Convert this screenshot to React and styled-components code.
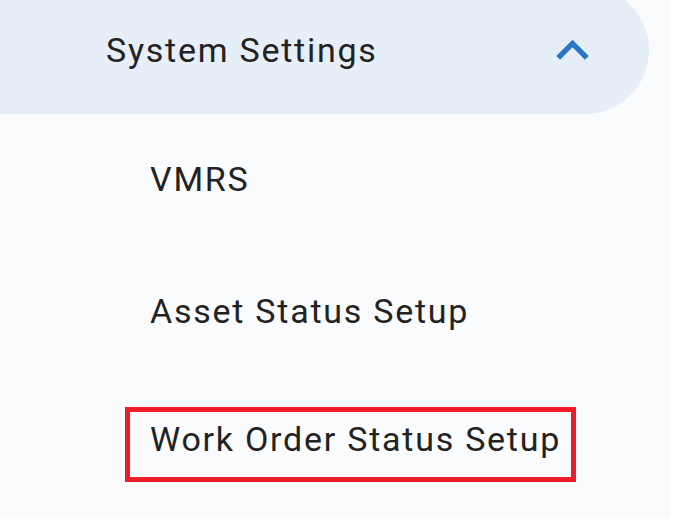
import React from "react";
import styled, { createGlobalStyle } from "styled-components";

const Global = createGlobalStyle`
  html, body { margin: 0; padding: 0; }
  body {
    background: #fafbfc;
    font-family: Roboto, "Noto Sans", "Liberation Sans", sans-serif;
    overflow: hidden;
  }
`;

const Page = styled.div`
  display: flex;
  width: 675px;
  height: 519px;
  overflow: hidden;
`;

const Nav = styled.nav`
  width: 671px;
  display: flex;
  flex-direction: column;
`;

const EdgeStrip = styled.div`
  width: 4px;
  background: #ffffff;
`;

const GroupHeader = styled.div`
  margin-top: -14px;
  width: 649px;
  height: 128px;
  box-sizing: border-box;
  display: flex;
  align-items: center;
  justify-content: space-between;
  padding: 0 44px 0 106px;
  background: #e6eef7;
  border-radius: 0 64px 64px 0;
`;

const Label = styled.span`
  font-size: 34px;
  line-height: 40px;
  letter-spacing: 1.75px;
  color: #222222;
  white-space: nowrap;
`;

const Chevron = styled.svg`
  width: 65px;
  height: 65px;
  fill: #2b76c5;
  flex: none;
`;

const SubList = styled.ul`
  list-style: none;
  margin: 0;
  padding: 45px 0 0 150px;
  display: flex;
  flex-direction: column;
  align-items: flex-start;
`;

const SubItem = styled.li`
  margin-top: ${(p) => p.$gap}px;
`;

const Highlight = styled.div`
  box-sizing: border-box;
  width: 451px;
  margin-left: -25px;
  padding: 7px 0 18px 20px;
  border: 5px solid #ec1c29;
`;

export default function App() {
  return (
    <>
      <Global />
      <Page>
        <Nav>
          <GroupHeader>
            <Label>System Settings</Label>
            <Chevron viewBox="0 0 24 24">
              <path d="M12 8l-6 6 1.41 1.41L12 10.83l4.59 4.58L18 14z" />
            </Chevron>
          </GroupHeader>
          <SubList>
            <SubItem $gap={0}>
              <Label>VMRS</Label>
            </SubItem>
            <SubItem $gap={92}>
              <Label>Asset Status Setup</Label>
            </SubItem>
            <SubItem $gap={76}>
              <Highlight>
                <Label>Work Order Status Setup</Label>
              </Highlight>
            </SubItem>
          </SubList>
        </Nav>
        <EdgeStrip />
      </Page>
    </>
  );
}
